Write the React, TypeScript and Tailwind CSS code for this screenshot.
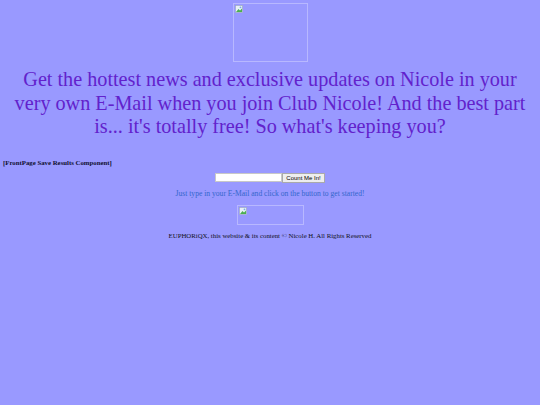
import React from "react"

function BrokenImage({ className }: { className: string }) {
  return (
    <div className={`border border-[#b8b8ff] ${className}`}>
      <svg width="8" height="8" viewBox="0 0 8 8" className="m-[1px]">
        <rect x="0.5" y="0.5" width="7" height="7" fill="#e8f0f8" stroke="#9aa8b8" strokeWidth="0.6" />
        <path d="M1 7 L3.5 4 L5 5.5 L7 3.5 L7 7 Z" fill="#4caf50" />
        <circle cx="5.5" cy="2.3" r="0.9" fill="#7ab0e0" />
      </svg>
    </div>
  )
}

export default function App() {
  return (
    <div className="min-h-[405px] w-[540px] bg-[#9999ff] font-['Liberation_Serif',serif]">
      <div className="flex flex-col items-center pt-[3px]">
        <BrokenImage className="w-[75px] h-[59px]" />
        <p className="mt-[6px] px-[8px] text-center text-[20.2px] leading-[23.5px] text-[#6222cc]">
          Get the hottest news and exclusive updates on Nicole in your very own E-Mail when you join Club Nicole! And the best part is... it's totally free! So what's keeping you?
        </p>
      </div>
      <p className="mt-[19px] pl-[3px] text-[6.8px] font-bold text-[#101030]">[FrontPage Save Results Component]</p>
      <div className="mt-[5px] flex flex-col items-center">
        <div className="flex items-center">
          <input className="h-[9px] w-[67px] border border-[#c8c8c8] bg-white" />
          <button className="h-[10px] px-[3px] border border-[#aaa] bg-[#eeeeee] font-['Liberation_Sans',sans-serif] text-[6px] leading-[8px] text-black">
            Count Me In!
          </button>
        </div>
        <p className="mt-[5px] text-[7.6px] text-[#3366cc]">Just type in your E-Mail and click on the button to get started!</p>
        <BrokenImage className="mt-[6px] w-[67px] h-[20px]" />
        <p className="mt-[6px] text-[6.8px] text-[#111122]">EUPHORiQX, this website &amp; its content © Nicole H. All Rights Reserved</p>
      </div>
    </div>
  )
}
